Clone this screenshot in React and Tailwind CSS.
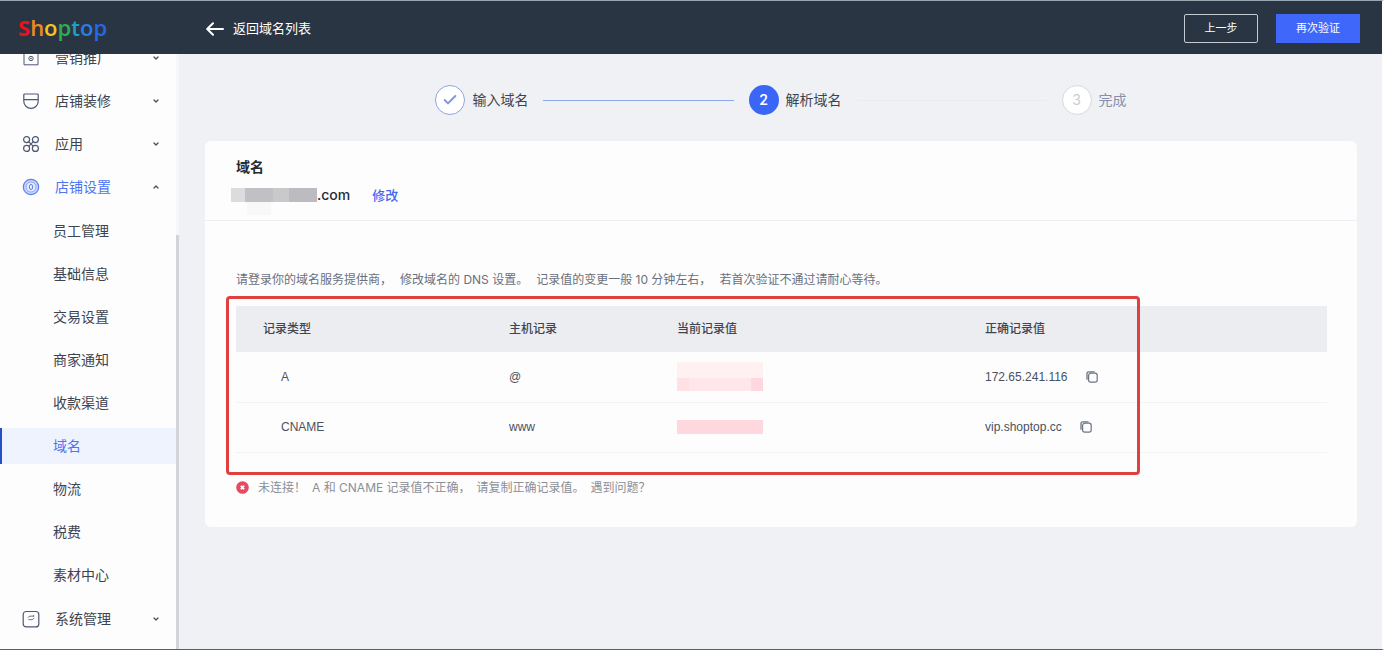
import React from 'react';
import { Check, ChevronDown, ChevronUp } from 'lucide-react';

const logo = [
    { char: 'S', color: 'text-[#e8121c] font-bold' },
    { char: 'h', color: 'text-[#f08a1d]' },
    { char: 'o', color: 'text-[#f5c518]' },
    { char: 'p', color: 'text-[#2fae4e]' },
    { char: 't', color: 'text-[#1e9fc4]' },
    { char: 'o', color: 'text-[#2b7de9]' },
    { char: 'p', color: 'text-[#2468e6]' },
];

const settingsItems = ['员工管理', '基础信息', '交易设置', '商家通知', '收款渠道', '域名', '物流', '税费', '素材中心'];

const records = [
    { type: 'A', host: '@', value: '172.65.241.116', masked: 'tall' },
    { type: 'CNAME', host: 'www', value: 'vip.shoptop.cc', masked: 'short' },
];

function MarketingIcon() {
    return (
        <svg className="w-[18px] h-[18px] shrink-0" viewBox="0 0 18 18" fill="none" stroke="currentColor">
            <path d="M2 3.5v12.3h14V3.5M2 3.5h14" />
            <circle cx="9" cy="9.5" r="2.2" />
            <circle cx="9" cy="9.5" r="0.5" />
        </svg>
    );
}

function DesignIcon() {
    return (
        <svg className="w-[18px] h-[18px] shrink-0" viewBox="0 0 18 18" fill="none" stroke="currentColor" strokeWidth="1.2">
            <path d="M2.8 2h12.4a1 1 0 0 1 1 1v6.2a7.2 7.2 0 0 1-14.4 0V3a1 1 0 0 1 1-1zM2 7.6h14" />
        </svg>
    );
}

function AppsIcon() {
    return (
        <svg className="w-[18px] h-[18px] shrink-0" viewBox="0 0 18 18" fill="none" stroke="currentColor" strokeWidth="1.2">
            <circle cx="4.6" cy="4.6" r="3" />
            <circle cx="13.4" cy="4.6" r="3" />
            <circle cx="4.6" cy="13.4" r="3" />
            <circle cx="13.4" cy="13.4" r="3" />
            <path d="M6.7 6.7l4.6 4.6M11.3 6.7l-4.6 4.6" />
        </svg>
    );
}

function ShopIcon() {
    return (
        <svg className="w-[18px] h-[18px] shrink-0" viewBox="0 0 18 18" fill="none" stroke="currentColor">
            <circle cx="9" cy="9" r="7.7" fill="#c9d6fa" strokeWidth="1.2" />
            <circle cx="9" cy="9" r="5" fill="#e6ecfd" strokeWidth="0.6" />
            <ellipse cx="9" cy="9" rx="1.7" ry="2.6" />
        </svg>
    );
}

function SystemIcon() {
    return (
        <svg className="w-[18px] h-[18px] shrink-0" viewBox="0 0 18 18" fill="none" stroke="currentColor">
            <rect x="1.2" y="1.5" width="15.6" height="15.4" rx="3" strokeWidth="1.2" />
            <path d="M6 7.6c.8-1.4 2-1.6 5.6-1.4M12 7.8c-.6 1.8-1.6 2-5.6 1.8M11.6 5v1.6" strokeWidth="0.9" />
        </svg>
    );
}

function BackIcon() {
    return (
        <svg className="w-[18px] h-4" viewBox="0 0 18 16" fill="none" stroke="currentColor" strokeWidth="2" strokeLinecap="round" strokeLinejoin="round">
            <path d="M17 8H1.5M7 2.2L1.2 8 7 13.8" />
        </svg>
    );
}

function CopyIcon() {
    return (
        <svg className="w-3 h-3" viewBox="0 0 12 12" fill="none" stroke="currentColor">
            <path d="M1 8.8V2.4A1.6 1.6 0 0 1 2.6.8h6" strokeWidth="1.3" />
            <rect x="2.6" y="2.2" width="8.6" height="9" rx="2.2" strokeWidth="1.2" />
        </svg>
    );
}

function MenuRow({ icon: Icon, label, open }) {
    const Arrow = open ? ChevronUp : ChevronDown;
    return (
        <button
            className={`w-full h-[43px] pl-[22px] pr-4 flex items-center text-sm ${open ? 'text-[#4d74f5]' : 'text-[#3d4450]'}`}
        >
            <span className={open ? 'text-[#5b7ff0]' : 'text-[#4f5873]'}>
                <Icon />
            </span>
            <span className="ml-[15px]">{label}</span>
            <Arrow className="ml-auto w-2 h-2 text-[#4a505c]" strokeWidth={4} />
        </button>
    );
}

function Sidebar() {
    return (
        <aside className="w-[179px] shrink-0 flex bg-[#fdfdfe]">
            <nav className="flex-1 overflow-hidden">
                <div className="-mt-[18px]">
                    <MenuRow icon={MarketingIcon} label="营销推广" />
                    <MenuRow icon={DesignIcon} label="店铺装修" />
                    <MenuRow icon={AppsIcon} label="应用" />
                    <MenuRow icon={ShopIcon} label="店铺设置" open />
                    <ul className="py-px">
                        {settingsItems.map((item) => (
                            <li key={item} className="h-[43px] flex items-center">
                                <a
                                    href="#"
                                    className={`w-full h-9 flex items-center border-l-2 pl-[51px] text-sm ${
                                        item === '域名'
                                            ? 'border-[#2450c8] bg-[#eff3fd] text-[#4d74f5]'
                                            : 'border-transparent text-[#3d4450]'
                                    }`}
                                >
                                    {item}
                                </a>
                            </li>
                        ))}
                    </ul>
                    <MenuRow icon={SystemIcon} label="系统管理" />
                </div>
            </nav>
            {/* Scrollbar */}
            <div className="w-[3px] flex flex-col bg-[#f6f7fa]">
                <div className="flex-1 mt-[181px] bg-[#d2d4d9]" />
            </div>
        </aside>
    );
}

function Steps() {
    return (
        <ol className="w-3/5 mx-auto flex items-center text-sm text-[#3d4450]">
            <li className="flex items-center gap-[7px]">
                <span className="w-[30px] h-[30px] rounded-full border border-[#8fa3e0] bg-white flex items-center justify-center">
                    <Check className="w-4 h-4 text-[#7f97e0]" strokeWidth={3} />
                </span>
                输入域名
            </li>
            <li aria-hidden="true" className="flex-1 h-px mx-[15px] bg-[#8ea8ec]" />
            <li className="flex items-center gap-[7px]">
                <span className="w-[30px] h-[30px] rounded-full bg-[#3a66f8] flex items-center justify-center font-semibold text-white">
                    2
                </span>
                解析域名
            </li>
            <li aria-hidden="true" className="flex-1 h-px mx-[15px] bg-[#e9ecf0]" />
            <li className="flex items-center gap-[7px] text-[#8590ad]">
                <span className="w-[30px] h-[30px] rounded-full border border-[#d5d8de] bg-white flex items-center justify-center text-[#c9ccd2]">
                    3
                </span>
                完成
            </li>
        </ol>
    );
}

function MaskedValue({ size }) {
    if (size === 'tall') {
        return (
            <div className="w-[86px] h-[29px] flex flex-col">
                <div className="h-4 bg-[#fff0f2]" />
                <div className="flex-1 flex">
                    <div className="w-3 bg-[#ffe0e5]" />
                    <div className="flex-1 bg-[#ffe6ea]" />
                    <div className="w-3 bg-[#ffd8df]" />
                </div>
            </div>
        );
    }
    return <div className="w-[86px] h-[14px] bg-[#ffd7de]" />;
}

function RecordTable() {
    return (
        <div className="relative">
            <table className="w-full table-fixed text-left text-xs text-[#4a5160]">
                <thead className="bg-[#ebedf1] text-[#3f4653]">
                    <tr className="h-[46px]">
                        <th className="w-[247px] pl-[27px] font-medium">记录类型</th>
                        <th className="w-[168px] pl-[26px] font-medium">主机记录</th>
                        <th className="w-[308px] pl-[26px] font-medium">当前记录值</th>
                        <th className="pl-[26px] font-medium">正确记录值</th>
                    </tr>
                </thead>
                <tbody className="font-['Liberation_Sans','Noto_Sans_CJK_SC',sans-serif]">
                    {records.map((record) => (
                        <tr key={record.type} className="h-[50px] border-b border-[#f2f3f5]">
                            <td className="pl-[45px]">{record.type}</td>
                            <td className="pl-[26px]">{record.host}</td>
                            <td className="pl-[26px]">
                                <MaskedValue size={record.masked} />
                            </td>
                            <td className="pl-[26px]">
                                <div className="flex items-center gap-[18px]">
                                    {record.value}
                                    <button aria-label="复制" className="text-[#6b7486]">
                                        <CopyIcon />
                                    </button>
                                </div>
                            </td>
                        </tr>
                    ))}
                </tbody>
            </table>
            {/* Highlight frame */}
            <div className="absolute -top-[10px] -left-[10px] right-[187px] -bottom-[22px] border-[3px] border-[#e0403f] rounded pointer-events-none" />
        </div>
    );
}

export default function App() {
    return (
        <div className="min-h-screen flex flex-col border-t border-t-[#9aa7b2] border-b border-b-[#5c5e63] border-r-2 border-r-white bg-[#eff1f4] font-['Inter','Noto_Sans_CJK_SC',sans-serif]">
            {/* Top bar */}
            <header className="h-[53px] shrink-0 flex items-center bg-[#2a3543] pt-0.5 pl-[18px] pr-[22px] text-white">
                <div className="w-[188px] pb-1 font-['Open_Sans',sans-serif] text-[22px] leading-6 font-semibold">
                    {logo.map((letter, index) => (
                        <span key={index} className={letter.color}>{letter.char}</span>
                    ))}
                </div>
                <a href="#" className="flex items-center gap-[9px] text-[13px]">
                    <BackIcon />
                    返回域名列表
                </a>
                <div className="ml-auto flex gap-[18px] text-[11px]">
                    <button className="w-[74px] h-[29px] border border-[#c3cad2] rounded-xs">上一步</button>
                    <button className="w-[84px] h-[29px] bg-[#3f68fa]">再次验证</button>
                </div>
            </header>

            <div className="flex-1 flex">
                <Sidebar />
                <main className="flex-1 pl-[26px] pr-[25px] pt-[31px] pb-10">
                    <Steps />

                    <section className="mt-[26px] rounded-md bg-[#fdfdfe]">
                        <div className="h-20 pt-4 pl-[26px] border-b border-[#edeff2]">
                            <h1 className="pl-[5px] text-sm font-bold text-[#262b33]">域名</h1>
                            <div className="mt-2 flex items-center text-sm">
                                {/* Mosaic over the domain name */}
                                <div className="relative w-[86px] h-[14px] flex">
                                    <div className="w-[14px] bg-[#dcdcdf]" />
                                    <div className="w-7 bg-[#c1c1c5]" />
                                    <div className="w-4 bg-[#c9c9cc]" />
                                    <div className="flex-1 bg-[#bcbcc0]" />
                                    <div className="absolute top-full left-4 w-6 h-[13px] bg-[#f8f8f9]" />
                                </div>
                                <span className="font-medium text-[#262b33]">.com</span>
                                <a href="#" className="ml-[22px] text-[13px] font-medium text-[#4468ee]">修改</a>
                            </div>
                        </div>

                        <div className="pt-[49px] pb-[29px] pl-[31px] pr-[30px] text-xs text-[#6a707c]">
                            <p className="mb-4 flex flex-wrap gap-x-2 leading-5">
                                <span>请登录你的域名服务提供商，</span>
                                <span>修改域名的 DNS 设置。</span>
                                <span>记录值的变更一般 10 分钟左右，</span>
                                <span>若首次验证不通过请耐心等待。</span>
                            </p>
                            <RecordTable />
                            <div className="mt-[25px] flex items-center text-[#8a8f98] leading-5">
                                <svg className="w-[13px] h-[13px] mr-[9px]" viewBox="0 0 13 13">
                                    <circle cx="6.5" cy="6.5" r="6.3" fill="#e84a5f" />
                                    <path d="M5.4 5.4l2.2 2.2M7.6 5.4L5.4 7.6" stroke="#fff" strokeWidth="2" strokeLinecap="round" />
                                </svg>
                                <p className="flex flex-wrap gap-x-[6px]">
                                    <span>未连接！</span>
                                    <span>A 和 CNAME 记录值不正确，</span>
                                    <span>请复制正确记录值。</span>
                                    <a href="#">遇到问题？</a>
                                </p>
                            </div>
                        </div>
                    </section>
                </main>
            </div>
        </div>
    );
}
